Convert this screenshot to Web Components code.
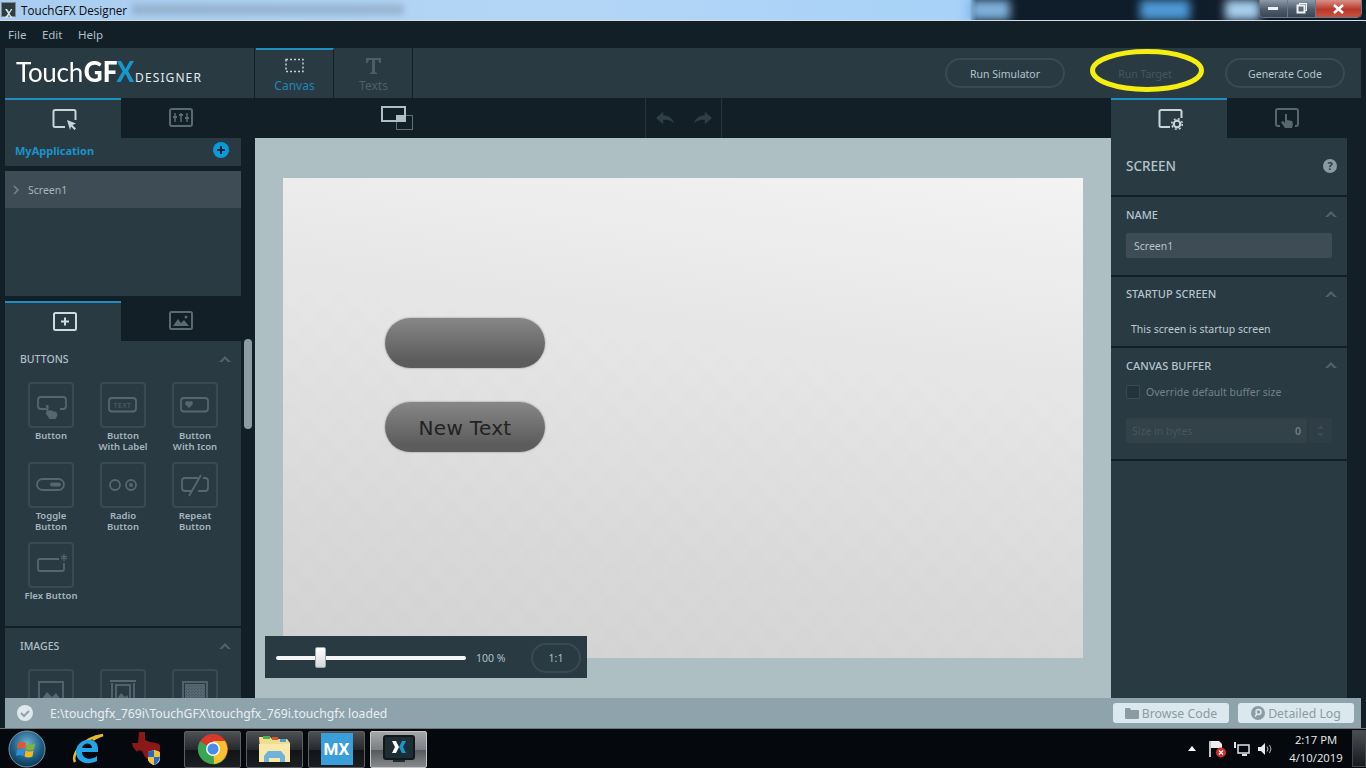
<!DOCTYPE html>
<html lang="en">
<head>
<meta charset="utf-8">
<title>TouchGFX Designer</title>
<style>
html, body { margin: 0; height: 100%; overflow: hidden; background: #121f27; }
body { width: 1366px; height: 768px; display: flex; flex-direction: column; font-family: "Noto Sans", "Open Sans", sans-serif; }
</style>
</head>
<body>
<tg-titlebar></tg-titlebar>
<tg-menubar></tg-menubar>
<tg-toolbar></tg-toolbar>
<tg-workspace>
	<tg-leftcol slot="left"></tg-leftcol>
	<tg-stage slot="center"></tg-stage>
	<tg-props slot="right"></tg-props>
</tg-workspace>
<tg-status></tg-status>
<tg-taskbar></tg-taskbar>

<script>
const mk = (tag, html) => {
	customElements.define(tag, class extends HTMLElement {
		constructor() {
			super();
			const root = this.attachShadow({mode: 'open'});
			root.innerHTML = typeof html === 'function' ? html(this) : html;
		}
	});
};

const chevron = `<svg width="12" height="8" viewBox="0 0 12 8"><path d="M0 7 6 1l6 6H9L6 4 3 7z" fill="#51626b"/></svg>`;

mk('tg-pill', el => `<style>
	:host { display: block; width: 120px; height: 30px; }
	div { box-sizing: border-box; height: 30px; padding-top: 1px; border: 2px solid; border-radius: 15px; display: flex; align-items: center; justify-content: center; font-size: 10.5px; color: ${el.hasAttribute('off') ? '#46565f' : '#b4c4cc'}; border-color: ${el.hasAttribute('off') ? 'transparent' : '#3a4a52'}; }
	</style><div><slot></slot></div>`);

mk('tg-tab', el => `<style>
	:host { display: flex; align-items: center; justify-content: center; box-sizing: border-box; height: 40px; width: ${el.getAttribute('w') || 116}px; }
	:host([on]) { background: #2a3a43; border-top: 2px solid #1e8fc0; }
	</style><slot></slot>`);

mk('tg-tool', el => `<style>
	:host { display: flex; flex-direction: column; align-items: center; width: 72px; height: 80px; }
	.t { box-sizing: border-box; width: 46px; height: 46px; border: 2px solid #3a4a52; border-radius: 4px; flex: none; }
	.l { margin-top: 2px; font-size: 9.5px; line-height: 11px; font-weight: 600; color: #a3b5bf; text-align: center; white-space: nowrap; }
	</style><div class="t"><slot name="i"></slot></div><div class="l"><slot></slot></div>`);

mk('tg-section', el => `<style>
	:host { display: block; background: #2a3a43; box-sizing: border-box; padding: 0 15px; margin-bottom: 2px; height: ${el.getAttribute('h')}px; }
	.h { display: flex; justify-content: space-between; align-items: center; height: ${el.getAttribute('head') || 34}px; font-size: 11px; color: #b4c4cc; font-weight: 500; }
	.h svg { margin-right: -5px; }
	</style><div class="h"><span>${el.getAttribute('name')}</span>${chevron}</div><slot></slot>`);

mk('tg-titlebar', `<style>
	:host { display: block; height: 21px; position: relative; overflow: hidden; box-sizing: border-box; border-bottom: 1px solid #d3dde2; background: linear-gradient(90deg, #a9cdf0 0, #b4d6f6 40%, #a8d2f8 70%, #9ccbf6 71%, #0f1c2a 71.500%, #0f1c2a 100%); }
	.blur { position: absolute; top: 4px; height: 11px; filter: blur(3px); background: #6c7f94; left: 132px; width: 272px; opacity: .35; }
	.b2 { position: absolute; top: 0; height: 20px; filter: blur(5px); }
	.name { position: absolute; left: 21px; top: 2px; font: 11.700px/17px "Open Sans", sans-serif; color: #0c0c0c; }
	.logo { position: absolute; left: 1px; top: 2px; width: 15px; height: 15px; background: #2c3d44; border: 1px solid #888; box-sizing: border-box; }
	.cap { position: absolute; right: 4px; top: 0; width: 103px; height: 18px; display: flex; border: 1px solid #6b7a88; border-top: 0; border-radius: 0 0 5px 5px; overflow: hidden; box-sizing: border-box; }
	.cap div { height: 100%; display: flex; align-items: center; justify-content: center; border-right: 1px solid #6b7a88; }
	.min, .max { width: 27px; background: linear-gradient(#8d9aa7, #4e5c6b 55%, #394755); }
	.cls { flex: 1; background: linear-gradient(#d99085, #b8392b 55%, #c9513f); border-right: 0 !important; }
	</style>
	<div class="b2" style="left:970px;width:40px;background:#7fb2dc"></div>
	<div class="b2" style="left:1140px;width:50px;background:#4f9ad8"></div>
	<div class="b2" style="left:1225px;width:35px;background:#a8d0ef"></div>
	<div class="blur"></div>
	<div class="logo"><svg width="13" height="13" viewBox="0 0 13 13"><path d="M3 2l3 4.500L3 11h2l2-3 2 3h1.500L7.500 6.500 10.500 2H9L7 5 5 2z" fill="#dfe8ec"/></svg></div>
	<div class="name">TouchGFX Designer</div>
	<div class="cap">
		<div class="min"><svg width="11" height="5"><rect y="1" width="10" height="3" fill="#eef2f5"/></svg></div>
		<div class="max"><svg width="12" height="12" fill="none" stroke="#eef2f5"><rect x="3.500" y=".5" width="7" height="7"/><rect x="1.500" y="2.500" width="7" height="7" fill="#5c6a78" stroke-width="2"/></svg></div>
		<div class="cls"><svg width="11" height="10" viewBox="0 0 11 10"><path d="M1 1l9 8M10 1 1 9" stroke="#fff" stroke-width="2.600"/></svg></div>
	</div>`);

mk('tg-menubar', `<style>
	:host { display: flex; height: 27px; align-items: center; padding-left: 8px; gap: 15.500px; font-size: 11.500px; color: #aebfc8; box-sizing: border-box; }
	</style><span>File</span><span>Edit</span><span>Help</span>`);

mk('tg-logo', `<style>
	:host { display: flex; align-items: baseline; width: 250px; box-sizing: border-box; padding: 8px 0 0 11px; color: #fff; font-family: Lato, "Noto Sans", sans-serif; font-size: 26px; line-height: 33px; border-right: 1px solid #121f27; white-space: nowrap; }
	.a, .b, .x { transform: scaleY(1.07); transform-origin: 0 26px; }
	.a { font-weight: 400; letter-spacing: -.3px; }
	.b { font-weight: 900; margin-left: 1px; }
	.x { font-weight: 900; color: #1798cc; margin-left: -1px; }
	.d { font: 12px "Noto Sans", sans-serif; letter-spacing: 1.100px; margin-left: 1px; color: #e4ecef; }
	</style><span class="a">Touch</span><span class="b">GF</span><span class="x">X</span><span class="d">DESIGNER</span>`);

mk('tg-toolbar', `<style>
	:host { display: flex; height: 50px; margin: 0 5px; background: #2a3a43; position: relative; }
	.tab { box-sizing: border-box; width: 78px; margin-left: 1px; display: flex; flex-direction: column; align-items: center; font-size: 12px; color: #4f5f68; padding-top: 8px; border-right: 1px solid #121f27; }
	.tab svg { display: block; height: 20px; }
	.tab span { margin-top: 1px; line-height: 17px; }
	.tab.on { color: #1d88b4; border-top: 2px solid #1e8fc0; padding-top: 6px; }
	.act { margin-left: auto; margin-right: 16px; display: flex; gap: 20px; align-items: center; }
	.ring { position: absolute; left: 1085px; top: 1px; }
	</style>
	<tg-logo></tg-logo>
	<div class="tab on"><svg width="20" height="16" viewBox="0 0 20 16"><rect x="1" y="1.500" width="17" height="12" fill="none" stroke="#c4d0d6" stroke-width="1.500" stroke-dasharray="2 2"/></svg><span>Canvas</span></div>
	<div class="tab"><svg width="20" height="18" viewBox="0 0 20 18"><path d="M2 1h15v5h-1.500L14 3h-3v12l2 1v1H6v-1l2-1V3H5L3.500 6H2z" fill="#4e5e67"/></svg><span>Texts</span></div>
	<div class="act">
		<tg-pill>Run Simulator</tg-pill>
		<tg-pill off>Run Target</tg-pill>
		<tg-pill>Generate Code</tg-pill>
	</div>
	<svg class="ring" width="118" height="46"><ellipse cx="57" cy="21.500" rx="54.500" ry="19" fill="none" stroke="#f4ef10" stroke-width="5"/></svg>`);

mk('tg-workspace', `<style>
	:host { display: flex; height: 600px; }
	.l { width: 236px; margin-left: 5px; flex: none; }
	.c { flex: none; width: 870px; }
	.r { flex: none; width: 236px; }
	</style><div class="l"><slot name="left"></slot></div><div class="c"><slot name="center"></slot></div><div class="r"><slot name="right"></slot></div>`);

const scrTab = `<svg style="margin-left:4px" width="26" height="21" viewBox="0 0 26 21"><path d="M13 18H3a1.500 1.500 0 0 1-1.500-1.500v-14A1.500 1.500 0 0 1 3 1h19a1.500 1.500 0 0 1 1.500 1.500V11" fill="none" stroke="#c9d5db" stroke-width="2"/><path d="M15 11l9 3.500-3.500 1.500 3.500 3.500-1.500 1.500-3.500-3.500-1 3.500z" fill="#c9d5db"/></svg>`;
const slideTab = `<svg width="24" height="20" viewBox="0 0 24 20"><rect x="1" y="1" width="22" height="17" rx="2" fill="none" stroke="#5a6a73" stroke-width="2"/><path d="M6 5v9M12 5v9M18 5v9" stroke="#5a6a73" stroke-width="1.500"/><path d="M4 9h4M10 7h4M16 10h4" stroke="#5a6a73" stroke-width="2"/></svg>`;
const i = (body) => `<svg slot="i" style="display:block" width="42" height="42" viewBox="0 0 42 42" fill="none" stroke="#566770" stroke-width="1.800">${body}</svg>`;

mk('tg-leftcol', `<style>
	:host { display: flex; flex-direction: column; height: 600px; position: relative; }
	.tabs { display: flex; height: 40px; flex: none; }
	.tree { background: #2a3a43; height: 158px; flex: none; }
	.app { box-sizing: border-box; height: 33px; display: flex; align-items: center; justify-content: space-between; padding: 0 12px 4px 10px; font-size: 11px; font-weight: 700; color: #1b93c9; border-bottom: 5px solid #121f27; }
	.row { height: 37px; background: #3d4c55; display: flex; align-items: center; font-size: 10.500px; color: #a3b5bf; gap: 9px; padding-left: 8px; }
	.tools { background: #2a3a43; height: 285px; flex: none; box-sizing: border-box; margin-bottom: 2px; }
	.sec { display: flex; justify-content: space-between; align-items: center; padding: 0 10px 0 15px; height: 36px; font-size: 10.500px; font-weight: 500; color: #aebfc8; }
	.grid { display: flex; flex-wrap: wrap; width: 216px; padding: 5px 0 0 10px; }
	.img { background: #2a3a43; flex: 1; overflow: hidden; }
	.scroll { position: absolute; left: 239px; top: 241px; width: 8px; height: 90px; background: #8a9ba4; border-radius: 4px; }
	</style>
	<div class="tabs"><tg-tab on>${scrTab}</tg-tab><tg-tab w="120">${slideTab}</tg-tab></div>
	<div class="tree">
		<div class="app"><span>MyApplication</span><svg width="16" height="16" viewBox="0 0 16 16"><circle cx="8" cy="8" r="8" fill="#069bdb"/><path d="M8 4v8M4 8h8" stroke="#15242d" stroke-width="2"/></svg></div>
		<div class="row"><svg width="6" height="10" viewBox="0 0 6 10"><path d="M1 1l4 4-4 4" fill="none" stroke="#75868f" stroke-width="1.500"/></svg>Screen1</div>
	</div>
	<div style="height:5px;flex:none"></div>
	<div class="tabs">
		<tg-tab on><svg style="margin-left:4px" width="24" height="20" viewBox="0 0 24 20"><rect x="1" y="1" width="22" height="17" rx="1.500" fill="none" stroke="#d0dbe0" stroke-width="2"/><path d="M12 5.500v8M8 9.500h8" stroke="#d0dbe0" stroke-width="2"/></svg></tg-tab>
		<tg-tab w="120"><svg width="24" height="20" viewBox="0 0 24 20"><rect x="1" y="1" width="22" height="17" rx="1.500" fill="none" stroke="#5a6a73" stroke-width="2"/><path d="M4 15l5-7 3 4 3-3 5 6z" fill="#5a6a73"/><circle cx="17" cy="6" r="1.500" fill="#5a6a73"/></svg></tg-tab>
	</div>
	<div class="tools">
		<div class="sec"><span>BUTTONS</span>${chevron}</div>
		<div class="grid">
			<tg-tool>${i('<path d="M16 25h-5a3 3 0 0 1-3-3v-6a3 3 0 0 1 3-3h22a3 3 0 0 1 3 3v6a3 3 0 0 1-3 3h-3"/><path d="M16 21h2.500v6l2-1 2 1 4 1 1 3-2 4h-6l-4-6 1-1z" fill="#566770" stroke="none"/>')}Button</tg-tool>
			<tg-tool>${i('<rect x="7" y="14" width="27" height="13.500" rx="3"/><text x="20.500" y="23.500" font-size="7" font-family="Noto Sans" text-anchor="middle" fill="#566770" stroke="none" letter-spacing=".6">TEXT</text>')}Button<br>With Label</tg-tool>
			<tg-tool>${i('<rect x="7" y="14" width="27" height="13.500" rx="3"/><path d="M15 24l-3.500-3.500a2 2 0 0 1 3.500-2.500 2 2 0 0 1 3.500 2.500z" fill="#566770" stroke="none"/>')}Button<br>With Icon</tg-tool>
			<tg-tool>${i('<rect x="7" y="15" width="27" height="11" rx="5.500"/><rect x="20" y="18.500" width="11" height="4" rx="2" fill="#566770" stroke="none"/>')}Toggle<br>Button</tg-tool>
			<tg-tool>${i('<circle cx="13" cy="21" r="5"/><circle cx="29" cy="21" r="5"/><circle cx="29" cy="21" r="2" fill="#566770" stroke="none"/>')}Radio<br>Button</tg-tool>
			<tg-tool>${i('<path d="M18 27h-7a3 3 0 0 1-3-3v-7a3 3 0 0 1 3-3h13M24 27h7a3 3 0 0 0 3-3v-7a3 3 0 0 0-3-3h-2M15 32 27 11"/>')}Repeat<br>Button</tg-tool>
			<tg-tool>${i('<path d="M34 19v6a2 2 0 0 1-2 2H10a2 2 0 0 1-2-2v-8a2 2 0 0 1 2-2h19"/><path d="M34 10v7M31 12l6 3M37 12l-6 3" stroke-width="1.300"/>')}Flex Button</tg-tool>
		</div>
	</div>
	<div class="img">
		<div class="sec"><span>IMAGES</span>${chevron}</div>
		<div class="grid">
			<tg-tool>${i('<rect x="9" y="11" width="24" height="22"/><path d="M11 29l6-8 5 5 4-4 5 7z" fill="#566770" stroke="none"/>')}</tg-tool>
			<tg-tool>${i('<path d="M8 10h26M10 12v22M32 12v22"/><rect x="14" y="14" width="14" height="16"/><path d="M15 28l4-6 4 4 2-2 2 4z" fill="#566770" stroke="none"/>')}</tg-tool>
			<tg-tool>${i('<defs><pattern id="ch" width="3" height="3" patternUnits="userSpaceOnUse"><rect width="1.500" height="1.500" fill="#7b8b94"/><rect x="1.500" y="1.500" width="1.500" height="1.500" fill="#7b8b94"/></pattern></defs><rect x="9" y="11" width="24" height="22"/><rect x="11" y="13" width="20" height="18" fill="url(#ch)" stroke="none"/>')}</tg-tool>
		</div>
	</div>
	<div class="scroll"></div>`);

mk('tg-stage', `<style>
	:host { display: flex; flex-direction: column; height: 600px; }
	.strip { height: 40px; flex: none; display: flex; align-items: center; padding-left: 140px; }
	.hist { margin-left: 232px; width: 75px; height: 40px; border: solid #25343c; border-width: 0 1px; display: flex; align-items: center; justify-content: center; gap: 20px; }
	.area { flex: 1; margin-left: 14px; background: #aebfc4; position: relative; padding: 40px 28px; }
	.scr { width: 800px; height: 480px; position: relative; background:
		conic-gradient(rgba(255,255,255,.02) 25%, transparent 0 50%, rgba(255,255,255,.02) 0 75%, transparent 0) 0 0 / 32px 32px,
		linear-gradient(188deg, #f3f3f3 0, #e6e6e6 35%, #d8d8d8 75%, #d1d1d1 100%); }
	.btn { position: absolute; left: 102px; box-sizing: border-box; padding-top: 2px; width: 160px; height: 50px; border-radius: 25px; background: linear-gradient(#878787, #5c5c5c 85%); box-shadow: 0 0 2px rgba(90,90,90,.7); display: flex; align-items: center; justify-content: center; font: 20px "DejaVu Sans", Verdana, sans-serif; letter-spacing: .3px; color: #222; }
	.zoom { position: absolute; left: 10px; bottom: 20px; box-sizing: border-box; padding-top: 1px; width: 322px; height: 42px; background: #2a3a43; display: flex; align-items: center; font-size: 10.500px; color: #a7c0ca; }
	.track { margin-left: 11px; width: 190px; height: 4px; background: #f4f6f7; border-radius: 2px; position: relative; }
	.thumb { position: absolute; left: 39px; top: -9px; width: 11px; height: 21px; box-sizing: border-box; border: 1px solid #9aa7ad; border-radius: 2px; background: linear-gradient(#fff, #d4d8da); }
	.pct { margin-left: 10px; width: 40px; }
	.one { margin-left: 15px; box-sizing: border-box; width: 50px; height: 30px; border: 2px solid #3a4a52; border-radius: 15px; display: flex; align-items: center; justify-content: center; }
	</style>
	<div class="strip">
		<svg width="32" height="24" viewBox="0 0 32 24"><rect x="1" y="1" width="23" height="14" fill="none" stroke="#aebfc4" stroke-width="2"/><rect x="15" y="9" width="9" height="7" fill="#aebfc4"/><rect x="15.500" y="9.500" width="16" height="14" fill="none" stroke="#aebfc4" stroke-dasharray="1 1"/></svg>
		<div class="hist">
			<svg width="18" height="14" viewBox="0 0 20 14"><path d="M0 7l8-7v4c6 0 10 3 12 9-3-3-6-4-12-4v5z" fill="#2e3e47"/></svg>
			<svg width="18" height="14" viewBox="0 0 20 14"><path d="M20 7l-8-7v4C6 4 2 7 0 13c3-3 6-4 12-4v5z" fill="#2e3e47"/></svg>
		</div>
	</div>
	<div class="area">
		<div class="scr">
			<div class="btn" style="top:140px"></div>
			<div class="btn" style="top:224px">New Text</div>
		</div>
		<div class="zoom">
			<div class="track"><div class="thumb"></div></div>
			<div class="pct">100 %</div>
			<div class="one">1:1</div>
		</div>
	</div>`);

mk('tg-props', `<style>
	:host { display: flex; flex-direction: column; height: 600px; }
	.tabs { display: flex; height: 40px; flex: none; }
	.head { background: #2a3a43; height: 57px; flex: none; margin-bottom: 2px; display: flex; justify-content: space-between; align-items: center; padding: 0 10px 2px 15px; font-size: 13.500px; font-weight: 500; color: #b4c4cc; box-sizing: border-box; }
	.help { width: 14px; height: 14px; border-radius: 50%; background: #8b9ba3; color: #2a3a43; font-size: 11px; font-weight: 700; display: flex; align-items: center; justify-content: center; }
	.in { height: 25px; background: #3d4c55; border-radius: 2px; font-size: 10.500px; color: #b4c4cc; display: flex; align-items: center; padding-left: 8px; box-sizing: border-box; width: 206px; margin-top: 2px; }
	.p { font-size: 10.500px; color: #bccad1; padding: 12px 0 0 5px; }
	.ck { display: flex; align-items: center; gap: 6px; font-size: 10.500px; color: #71828b; height: 20px; }
	.ck i { width: 14px; height: 14px; box-sizing: border-box; border: 1px solid #3a4a52; border-radius: 2px; background: #24333b; display: block; }
	.sz { display: flex; margin-top: 16px; width: 206px; height: 25px; gap: 1px; }
	.sz .f { flex: 1; background: #334149; border-radius: 2px; display: flex; justify-content: space-between; align-items: center; padding: 0 6px; font-size: 10.500px; color: #46565f; }
	.sz .f b { color: #6d7e87; font-weight: 600; }
	.sz .s { width: 24px; background: #2e3d46; display: flex; flex-direction: column; align-items: center; justify-content: center; gap: 4px; }
	.rest { flex: 1; background: #2a3a43; }
	</style>
	<div class="tabs">
		<tg-tab on><svg style="margin-left:4px" width="26" height="21" viewBox="0 0 26 21"><path d="M12 18H3a1.500 1.500 0 0 1-1.500-1.500v-14A1.500 1.500 0 0 1 3 1h19a1.500 1.500 0 0 1 1.500 1.500V9" fill="none" stroke="#c9d5db" stroke-width="2"/><circle cx="19" cy="15" r="3.300" fill="none" stroke="#c9d5db" stroke-width="2.200"/><circle cx="19" cy="15" r="5.300" fill="none" stroke="#c9d5db" stroke-width="1.500" stroke-dasharray="2 2.200"/></svg></tg-tab>
		<tg-tab w="120"><svg width="24" height="20" viewBox="0 0 24 20"><path d="M5 18H3a2 2 0 0 1-2-2V3a2 2 0 0 1 2-2h18a2 2 0 0 1 2 2v13a2 2 0 0 1-2 2h-1" fill="none" stroke="#566770" stroke-width="2"/><path d="M10 6h2v6l5 1 1 3-1 4h-7l-4-6 2-1 2 2z" fill="#566770"/></svg></tg-tab>
	</div>
	<div class="head"><span>SCREEN</span><span class="help">?</span></div>
	<tg-section name="NAME" h="78"><div class="in">Screen1</div></tg-section>
	<tg-section name="STARTUP SCREEN" h="69" head="33"><div class="p">This screen is startup screen</div></tg-section>
	<tg-section name="CANVAS BUFFER" h="111">
		<div class="ck"><i></i>Override default buffer size</div>
		<div class="sz"><div class="f"><span>Size in bytes</span><b>0</b></div><div class="s">
			<svg width="7" height="4"><path d="M0 4 3.500 0 7 4z" fill="#3a4a52"/></svg>
			<svg width="7" height="4"><path d="M0 0h7L3.500 4z" fill="#3a4a52"/></svg>
		</div></div>
	</tg-section>
	<div class="rest"></div>`);

mk('tg-linkbtn', `<style>
	:host { display: flex; align-items: center; justify-content: center; gap: 3px; box-sizing: border-box; width: 116px; height: 20px; background: #dbe9ef; border-radius: 3px; font-size: 12.300px; color: #8b9ba3; }
	</style><slot></slot>`);

mk('tg-status', `<style>
	:host { display: flex; align-items: center; margin: 0 5px; height: 30px; background: #8fa3ad; font-size: 12.200px; color: #e8eff2; }
	.ok { margin-left: 12px; display: block; }
	.tx { margin-left: 17px; flex: 1; }
	.b { display: flex; gap: 9px; margin-right: 7px; }
	</style>
	<svg class="ok" width="16" height="16" viewBox="0 0 16 16"><circle cx="8" cy="8" r="8" fill="#dfe8ec"/><path d="M4 8l3 3 5-5" fill="none" stroke="#8fa3ad" stroke-width="2"/></svg>
	<div class="tx">E:\\touchgfx_769i\\TouchGFX\\touchgfx_769i.touchgfx loaded</div>
	<div class="b">
		<tg-linkbtn><svg width="14" height="12" viewBox="0 0 14 12"><path d="M0 2a1 1 0 0 1 1-1h4l1 2h7a1 1 0 0 1 1 1v7a1 1 0 0 1-1 1H1a1 1 0 0 1-1-1z" fill="#8b9ba3"/></svg>Browse Code</tg-linkbtn>
		<tg-linkbtn><svg width="14" height="14" viewBox="0 0 14 14"><circle cx="7" cy="7" r="7" fill="#8b9ba3"/><circle cx="7.500" cy="6" r="2.500" fill="none" stroke="#dbe9ef" stroke-width="1.500"/><path d="M6 8 4 10.500" stroke="#dbe9ef" stroke-width="1.500"/></svg>Detailed Log</tg-linkbtn>
	</div>`);

mk('tg-taskbtn', `<style>
	:host { display: flex; align-items: center; justify-content: center; width: 57px; height: 37px; box-sizing: border-box; border: 1px solid #5c6064; border-radius: 2px; background: linear-gradient(#4e5154, #26292c 50%, #111416 51%, #1c1f22); }
	:host([on]) { background: linear-gradient(#a4a6a8, #7d8083 50%, #55585b 51%, #87898b); border-color: #c4c6c8; }
	</style><slot></slot>`);

mk('tg-taskbar', `<style>
	:host { display: flex; align-items: center; height: 40px; background: #05090d; border-top: 1px solid #6f7477; box-sizing: border-box; padding-top: 1px; position: relative; color: #e9ecee; font: 11.300px "Open Sans", sans-serif; }
	.q { display: flex; align-items: center; flex: none; }
	.btns { display: flex; gap: 5px; }
	.tray { position: absolute; right: 0; top: 0; height: 39px; display: flex; align-items: center; }
	.clock { width: 60px; text-align: center; line-height: 18px; margin-left: 13px; }
	.show { width: 14px; height: 37px; margin-left: 6px; border: 1px solid #44484b; box-sizing: border-box; background: linear-gradient(#4b4e51, #181b1e); }
	svg { display: block; }
	</style>
	<div class="q" style="width:184px">
		<svg style="margin-left:8px" width="38" height="38" viewBox="0 0 38 38"><defs><radialGradient id="o" cx=".5" cy=".35" r=".7"><stop offset="0" stop-color="#6fb1cf"/><stop offset=".6" stop-color="#1c5d84"/><stop offset="1" stop-color="#0b2c44"/></radialGradient></defs><circle cx="19" cy="19" r="18" fill="url(#o)" stroke="#7a97a6"/><path d="M10 13q4-2 8 0l-1 6q-4-2-8 0z" fill="#e2582e"/><path d="M19 13.500q4 2 8 0l-1 6q-4 2-8 0z" fill="#7cb43a"/><path d="M9 20q4-2 7.500 0l-1 6q-4-2-7.500 0z" fill="#2f8fd8"/><path d="M17.500 20.500q4 2 8 0l-1 6q-4 2-8 0z" fill="#f3b81e"/></svg>
		<svg style="margin-left:25px" width="34" height="34" viewBox="0 0 34 34"><path d="M4 30C0 24 10 6 32 3c-3 1-8 3-10 5" fill="none" stroke="#e8b92c" stroke-width="2.500"/><path d="M27 20h-16c0 7 9 9 15 4v5c-10 5-21 1-21-9 0-12 16-16 21-8 1 2 1 5 1 8zm-6-4c0-6-9-6-10 0z" fill="#22a6e8"/></svg>
		<svg style="margin-left:27px" width="32" height="36" viewBox="0 0 32 36"><path d="M7 1h6v8l5 2 6 1 4 2v5l-6 5-3 5-1 1-5-4-3-6-3-1-2 2-4-5-1-4h6z" fill="#8a1a1a"/><path d="M22 19l6 2v7c0 3-3 5-6 6-3-1-6-3-6-6v-7z" fill="#e8eef2"/><path d="M22 19v7h-6v-5zM22 26h6c0 3-3 7-6 8z" fill="#2a66c4"/><path d="M22 19l6 2v5h-6zM22 26v8c-3-1-6-3-6-8z" fill="#f1c232"/></svg>
	</div>
	<div class="btns">
		<tg-taskbtn><svg width="32" height="32" viewBox="0 0 32 32"><circle cx="16" cy="16" r="15" fill="#d8392b"/><path d="M16 16 29 24A15 15 0 0 1 9 29.300z" fill="#34a853"/><path d="M16 16 9 29.300A15 15 0 0 1 3 8.500z" fill="#34a853"/><path d="M16 8h12A15 15 0 0 1 17 31z" fill="#fbc02d"/><circle cx="16" cy="16" r="7" fill="#fff"/><circle cx="16" cy="16" r="5.500" fill="#4a8be8"/></svg></tg-taskbtn>
		<tg-taskbtn><svg width="34" height="30" viewBox="0 0 34 30"><path d="M1 3h11l2 2h15l3 4v19H3z" fill="#f2dc8e"/><rect x="5" y="2" width="7" height="3" fill="#4caf50"/><rect x="14" y="3" width="6" height="3" fill="#d9533b"/><rect x="22" y="5" width="6" height="3" fill="#4aa3d8"/><path d="M1 10h31v18H1z" fill="#f7e9ac"/><path d="M10 17h13l4 5v6h-5v-4H11v4H6v-6z" fill="#6fb3d8"/></svg></tg-taskbtn>
		<tg-taskbtn><div style="width:32px;height:32px;background:#3a9ed8;color:#fff;font:700 17px/32px 'Roboto',sans-serif;text-align:center">MX</div></tg-taskbtn>
		<tg-taskbtn on><svg width="32" height="28" viewBox="0 0 32 28"><rect x="1" y="1" width="30" height="23" rx="2" fill="#1c2d35" stroke="#10181d" stroke-width="2"/><path d="M10 25h12v2H10z" fill="#1c2d35"/><path d="M9 6h4l3 6-3 6H9l3-6z" fill="#fff"/><path d="M23 6h-4l-3 6 3 6h4l-3-6z" fill="#1798cc"/></svg></tg-taskbtn>
	</div>
	<div class="tray">
		<svg width="8" height="5"><path d="M0 5 4 0l4 5z" fill="#fff"/></svg>
		<svg style="margin-left:13px" width="18" height="18" viewBox="0 0 18 18"><path d="M1 1v16" stroke="#fff" stroke-width="1.500"/><path d="M2 1h8l3 3v4H2z" fill="#eee"/><circle cx="12" cy="12.500" r="5" fill="#d32f2f"/><path d="M10 10.500l4 4M14 10.500l-4 4" stroke="#fff" stroke-width="1.300"/></svg>
		<svg style="margin-left:7px" width="16" height="16" viewBox="0 0 16 16"><rect x="4" y="4" width="11" height="8" fill="none" stroke="#dfe3e5" stroke-width="1.500"/><path d="M8 14h5M1 1v6" stroke="#dfe3e5" stroke-width="2"/></svg>
		<svg style="margin-left:7px" width="16" height="14" viewBox="0 0 16 14"><path d="M1 5h3l4-4v12L4 9H1z" fill="#e6e9ea"/><path d="M10 4.500q2 2.500 0 5M12.500 3q3 4 0 8" fill="none" stroke="#aeb3b6"/></svg>
		<div class="clock">2:17 PM<br>4/10/2019</div>
		<div class="show"></div>
	</div>`);
</script>
</body>
</html>
